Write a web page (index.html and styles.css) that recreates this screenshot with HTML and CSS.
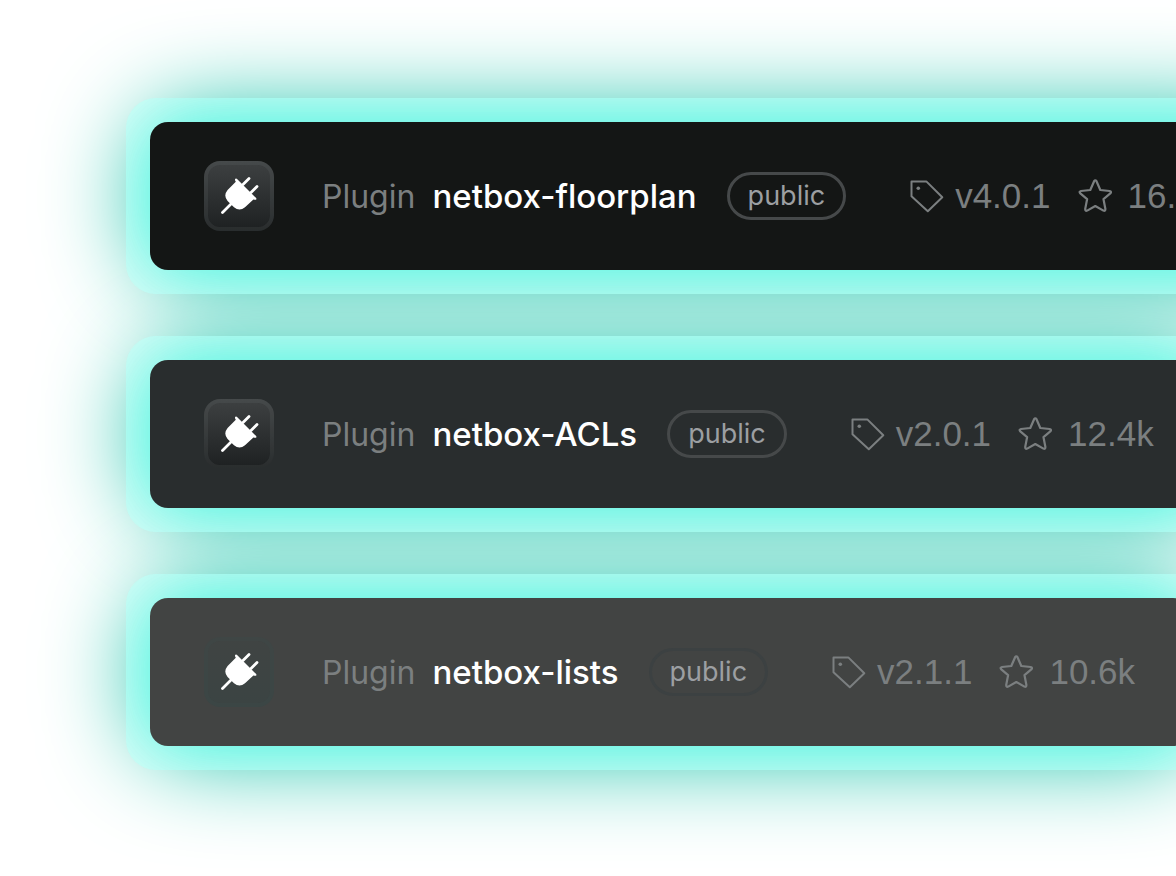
FILE: index.html
```
<!DOCTYPE html>
<html lang="en">
<head>
<meta charset="utf-8">
<meta name="viewport" content="width=device-width, initial-scale=1">
<title>Plugins</title>
<link rel="stylesheet" href="styles.css">
</head>
<body>
<svg class="sprite" aria-hidden="true">
  <symbol id="plug" viewBox="0 0 70 70">
    <path d="M18.5 51.5L29 41M39 23.5l6-6M47 31.5l6-6" fill="none" stroke="#fff" stroke-width="2.8" stroke-linecap="round"/>
    <path d="M32.8 17.7L52.2 37.1Q53 39.1 50.6 38.8L49.4 38.5L41 46.3Q35.5 50.9 30 46.3L23.6 39.9Q19 34.5 23.6 28.9L31.8 20.7L30.9 19.1Q30.9 16.8 32.8 17.7Z" fill="#fff"/>
  </symbol>
  <symbol id="tag" viewBox="0 0 34 34">
    <path d="M1.5 2.4H16.3L32.3 18.3L17.8 32.3L1.5 17.2Z" fill="none" stroke="currentColor" stroke-width="2" stroke-linejoin="round"/>
    <circle cx="8.3" cy="9.3" r="1.8" fill="currentColor"/>
  </symbol>
  <symbol id="star" viewBox="0 0 34 34">
    <path d="M16.1 2.2Q17.3 .4 18.5 2.2L22.3 11L31.6 12Q34 12.6 32.3 14.4L25.5 20.2L27.4 30Q27.4 32.4 25.4 31.6L17.3 27L9.2 31.6Q7.2 32.4 7.2 30L9.1 20.2L2.3 14.4Q.6 12.6 3 12L12.3 11Z" fill="none" stroke="currentColor" stroke-width="2.2" stroke-linejoin="round"/>
  </symbol>
</svg>
<ul class="plugins">
  <li class="plugin">
    <div class="frame">
      <article class="card card-dark">
        <span class="badge"><svg class="plug"><use href="#plug"/></svg></span>
        <span class="title"><span class="kind">Plugin</span><span class="name">netbox-floorplan</span></span>
        <span class="pill">public</span>
        <span class="stat version"><svg class="icon"><use href="#tag"/></svg>v4.0.1</span>
        <span class="stat stars"><svg class="icon"><use href="#star"/></svg>16.5k</span>
      </article>
    </div>
  </li>
  <li class="plugin">
    <div class="frame">
      <article class="card card-mid">
        <span class="badge"><svg class="plug"><use href="#plug"/></svg></span>
        <span class="title"><span class="kind">Plugin</span><span class="name">netbox-ACLs</span></span>
        <span class="pill">public</span>
        <span class="stat version"><svg class="icon"><use href="#tag"/></svg>v2.0.1</span>
        <span class="stat stars"><svg class="icon"><use href="#star"/></svg>12.4k</span>
      </article>
    </div>
  </li>
  <li class="plugin">
    <div class="frame">
      <article class="card card-light">
        <span class="badge"><svg class="plug"><use href="#plug"/></svg></span>
        <span class="title"><span class="kind">Plugin</span><span class="name">netbox-lists</span></span>
        <span class="pill">public</span>
        <span class="stat version"><svg class="icon"><use href="#tag"/></svg>v2.1.1</span>
        <span class="stat stars"><svg class="icon"><use href="#star"/></svg>10.6k</span>
      </article>
    </div>
  </li>
</ul>
</body>
</html>
```
FILE: styles.css
```
* {
  box-sizing: border-box;
}

body {
  margin: 0;
  overflow: hidden;
  background: #fff;
  font-family: Inter, "Liberation Sans", sans-serif;
}

.sprite {
  display: none;
}

.plugins {
  display: flex;
  flex-direction: column;
  align-items: flex-start;
  gap: 42px;
  margin: 0;
  padding: 98px 126px;
  list-style: none;
  isolation: isolate;
}

.plugin {
  position: relative;
}

/* Wide glow behind every frame */
.plugin::before {
  content: "";
  position: absolute;
  inset: 24px;
  z-index: -1;
  border-radius: 40px;
  background: #00bda1;
  box-shadow: 0 0 96px 9px #00bda1;
}

.frame {
  padding: 24px;
  border-radius: 30px;
  overflow: hidden;
  background: rgba(212, 255, 250, 0.7);
}

.card {
  display: flex;
  align-items: center;
  height: 148px;
  padding: 0 56px 0 54px;
  border-radius: 18px;
  box-shadow: 0 0 72px rgba(50, 252, 228, 0.8);
  color: #7b7f80;
  font-size: 33px;
  line-height: 40px;
  white-space: nowrap;
}

.card-dark {
  background: #141615;
}

.card-mid {
  background: #292d2e;
}

.card-light {
  background: #424443;
}

.badge {
  display: flex;
  margin-right: 48px;
  border: 4px solid rgba(128, 136, 138, 0.12);
  border-radius: 16px;
  background: linear-gradient(#3e4142, #1d2021) border-box;
}

.card-light .badge {
  border-color: rgba(60, 80, 78, 0.2);
  background: linear-gradient(#404443, #3b4443) border-box;
}

.plug {
  width: 70px;
  height: 70px;
  margin: -4px;
}

.title {
  display: flex;
  align-items: baseline;
  gap: 17px;
}

.kind {
  font-size: 32px;
}

.name {
  color: #fff;
  font-weight: 500;
}

.pill {
  margin-left: 30px;
  padding: 4px 18px;
  border: 3px solid #46494a;
  border-radius: 24px;
  color: #9c9fa2;
  font-size: 27px;
  line-height: 34px;
}

.card-light .pill {
  border-color: #3c4142;
}

.stat {
  display: flex;
  align-items: center;
  gap: 11px;
  font-family: "Liberation Sans", Arial, sans-serif;
  font-size: 35px;
}

.version {
  margin-left: 64px;
}

.stars {
  gap: 16px;
  margin-left: 27px;
}

.icon {
  width: 34px;
  height: 34px;
}
```
